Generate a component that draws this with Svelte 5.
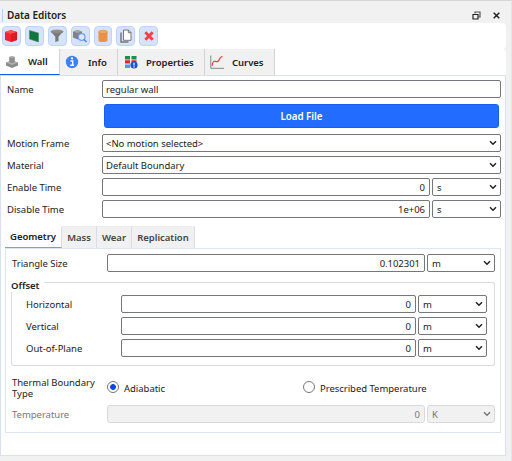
<script>
  let name = $state('regular wall');
  let boundaryType = $state('adiabatic');
  let activeTab = $state('Wall');
  let activeSubTab = $state('Geometry');

  const tools = ['cube', 'plane', 'filter', 'inspect', 'cylinder', 'copy', 'delete'];
  const tabs = ['Wall', 'Info', 'Properties', 'Curves'];
  const subTabs = ['Geometry', 'Mass', 'Wear', 'Replication'];
  const times = [
    { label: 'Enable Time', value: '0' },
    { label: 'Disable Time', value: '1e+06' }
  ];
  const offsets = ['Horizontal', 'Vertical', 'Out-of-Plane'];
</script>

{#snippet icon(kind)}
  <svg class="icon" viewBox="0 0 16 16" width="16" height="16" aria-hidden="true">
    {#if kind === 'cube'}
      <path d="M2 4 8 2l6 2v8l-6 2-6-2z" fill="#f0252f" />
      <path d="M2 4 8 2l6 2-6 2z" fill="#fa5055" />
      <path d="M8 6l6-2v8l-6 2z" fill="#dd1a25" />
    {:else if kind === 'plane'}
      <path d="M3.5 2.5 12.5 5v9L3.5 11z" fill="#12733f" stroke="#3a8a60" stroke-width=".6" />
    {:else if kind === 'filter'}
      <path d="M2 3.5 6.3 8.8V14l3.2-1V8.8L14 3.5z" fill="#777" />
      <ellipse cx="8" cy="3.7" rx="6" ry="1.7" fill="#8d8d8d" stroke="#777" stroke-width=".6" />
    {:else if kind === 'inspect'}
      <path d="M1 3.5 5.5 2l4.5 1.5v6L5.5 11.500 1 9.500z" fill="#828282" />
      <path d="M1 3.500 5.500 2 10 3.500 5.500 5z" fill="#a5a5a5" />
      <circle cx="9.700" cy="9" r="3.300" fill="#dceaff" stroke="#6f9ce6" stroke-width="1.200" />
      <path d="m12 11.300 2.500 2.700" stroke="#4f84d8" stroke-width="1.500" />
    {:else if kind === 'cylinder'}
      <path d="M3.500 4v8.500c0 2 9 2 9 0V4z" fill="#e9924a" />
      <ellipse cx="8" cy="4" rx="4.500" ry="1.800" fill="#efa768" stroke="#d07c33" stroke-width=".5" />
    {:else if kind === 'copy'}
      <path d="M3 4.500v9.500h7.500" fill="none" stroke="#777" stroke-width="1.500" />
      <path d="M5.500 2h5L13 4.500v7.800H5.500z" fill="#fff" stroke="#777" stroke-width="1" />
      <path d="M10.300 2v2.700H13" fill="none" stroke="#666" stroke-width=".9" />
    {:else if kind === 'delete'}
      <path d="m4.300 4.300 7.400 7.400M11.700 4.300l-7.400 7.400" stroke="#f5404a" stroke-width="2.800" />
    {:else if kind === 'Wall'}
      <path d="M2 8.500 8 6.500l6 2v3L8 14l-6-2.500z" fill="#8a8a8a" />
      <path d="M2 8.500 8 6.500l6 2L8 11z" fill="#b0b0b0" />
      <path d="M5.200 3 8 2l2.800 1v5L8 9.200 5.200 8z" fill="#8f8f8f" />
      <path d="M5.200 3 8 2l2.800 1L8 4z" fill="#b5b5b5" />
    {:else if kind === 'Info'}
      <circle cx="8" cy="8" r="6.200" fill="#3d82f5" />
      <path d="M6.500 7h2.200v4M6.300 11.300h3.800" fill="none" stroke="#fff" stroke-width="1.400" />
      <circle cx="8" cy="4.400" r="1.100" fill="#fff" />
    {:else if kind === 'Properties'}
      <path d="M2 2h5v3.500H2zM8.500 2h5v3.500h-5z" fill="#149150" />
      <path d="M2 6.300h5v3.200H2zM8.500 6.300h5v3h-5z" fill="#e8242c" />
      <path d="M2 10.500h5v3.500H2z" fill="#5b94f0" />
      <circle cx="11" cy="11" r="3.600" fill="#1459c7" />
      <path d="M11 8.700v2.800M11 12.300v1.100" stroke="#fff" stroke-width="1.200" />
    {:else if kind === 'Curves'}
      <path d="M1.800 1.500v12.800H15" fill="none" stroke="#888" stroke-width="1" />
      <path d="M3 12C4 5.500 5.500 7.500 8 7.700c3 .2 1.500-5 5.500-5.200" fill="none" stroke="#ee3b45" stroke-width="1.200" />
    {/if}
  </svg>
{/snippet}

{#snippet combo(text, disabled)}
  <div class="field combo" class:disabled>
    <span>{text}</span>
    <svg viewBox="0 0 8 6" width="8" height="6" aria-hidden="true">
      <path d="m1 1.200 3 3 3-3" fill="none" stroke="currentColor" stroke-width="1.500" />
    </svg>
  </div>
{/snippet}

<div class="dock">
  <header class="title-bar">
    <h1>Data Editors</h1>
    <button class="title-button" aria-label="Float">
      <svg viewBox="0 0 9 9" width="9" height="9">
        <path d="M3 2.500V1h5v5H6.500" fill="none" stroke="#555" stroke-width="1.200" />
        <path d="M1 3.500h5V8H1z" fill="#f4f4f4" stroke="#222" stroke-width="1.200" />
      </svg>
    </button>
    <button class="title-button" aria-label="Close">
      <svg viewBox="0 0 9 9" width="9" height="9">
        <path d="m1.700 1.700 5.600 5.600M7.300 1.700 1.700 7.300" stroke="#222" stroke-width="1.500" />
      </svg>
    </button>
  </header>

  <div class="toolbar">
    {#each tools as tool}
      <button class="tool" aria-label={tool}>{@render icon(tool)}</button>
    {/each}
  </div>

  <div class="tabs">
    {#each tabs as tab}
      <button class="tab {tab.toLowerCase()}" class:active={activeTab === tab} onclick={() => (activeTab = tab)}>
        {@render icon(tab)}
        <span>{tab}</span>
      </button>
    {/each}
  </div>

  <main class="panel">
    <div class="form">
      <div class="row">
        <label for="name">Name</label>
        <input id="name" class="field" bind:value={name} />
      </div>
      <button class="load">Load File</button>
      <div class="row">
        <span>Motion Frame</span>
        {@render combo('<No motion selected>', false)}
      </div>
      <div class="row">
        <span>Material</span>
        {@render combo('Default Boundary', false)}
      </div>
      {#each times as time}
        <div class="row with-unit">
          <span>{time.label}</span>
          <div class="field number">{time.value}</div>
          {@render combo('s', false)}
        </div>
      {/each}
    </div>

    <div class="sub-tabs">
      {#each subTabs as tab}
        <button class="sub-tab {tab.toLowerCase()}" class:active={activeSubTab === tab} onclick={() => (activeSubTab = tab)}>{tab}</button>
      {/each}
    </div>

    <section class="sub-panel">
      <div class="row with-unit narrow">
        <span>Triangle Size</span>
        <div class="field number">0.102301</div>
        {@render combo('m', false)}
      </div>

      <div class="group">
        <div class="group-title"><span>Offset</span></div>
        <div class="group-body">
          {#each offsets as offset}
            <div class="row with-unit">
              <span>{offset}</span>
              <div class="field number">0</div>
              {@render combo('m', false)}
            </div>
          {/each}
        </div>
      </div>

      <div class="thermal">
        <span class="thermal-label">Thermal Boundary Type</span>
        <label class="radio">
          <input type="radio" value="adiabatic" bind:group={boundaryType} />
          <span>Adiabatic</span>
        </label>
        <label class="radio">
          <input type="radio" value="prescribed" bind:group={boundaryType} />
          <span>Prescribed Temperature</span>
        </label>
      </div>

      <div class="row with-unit narrow muted">
        <span>Temperature</span>
        <div class="field number disabled">0</div>
        {@render combo('K', true)}
      </div>
    </section>
  </main>
</div>

<style>
  :global(body) {
    background: #f1f1f1;
    overflow: hidden;
  }

  .dock {
    box-sizing: border-box;
    width: 512px;
    height: 461px;
    padding-right: 5px;
    border-right: 1px solid #e2e6ee;
    border-top: 1px solid #d6d6d6;
    background: #f1f1f1;
    font: 9.5px/12px "Noto Sans", sans-serif;
    letter-spacing: -0.03px;
    color: #222;
  }

  .dock * {
    box-sizing: border-box;
  }

  button,
  input {
    margin: 0;
    padding: 0;
    border: 0;
    font: inherit;
    letter-spacing: inherit;
    color: inherit;
    background: none;
  }

  svg {
    display: block;
    flex: none;
  }

  .title-bar {
    display: flex;
    align-items: center;
    height: 22px;
    padding: 7px 0 0 2px;
  }

  h1 {
    flex: 1;
    margin: 0;
    padding-left: 4px;
    border-left: 1px solid #b9cffb;
    font-size: 10px;
    line-height: 13px;
    font-weight: 600;
    letter-spacing: -0.05px;
  }

  .title-button {
    width: 20px;
    display: flex;
    justify-content: center;
  }

  .toolbar {
    display: flex;
    gap: 4px;
    height: 26px;
    padding: 3px 2px;
    background: #fff;
    border-radius: 0 4px 4px 0;
  }

  .tool {
    display: flex;
    align-items: center;
    justify-content: center;
    width: 18.9px;
    height: 20px;
    border: 1px solid #bfd2f8;
    border-radius: 4px;
    background: #d6e3fd;
  }

  .tabs {
    display: flex;
    height: 26px;
    background: #fff;
    border-radius: 0 4px 0 0;
  }

  .tab {
    display: flex;
    align-items: center;
    border-right: 1px solid #d3d3d3;
    background: #f1f1f1;
    font-weight: 600;
  }

  .tab span {
    padding-top: 1px;
  }

  .tab.active {
    background: #fff;
    border-bottom: 1px solid #1857e0;
  }

  .wall {
    width: 60px;
    padding-left: 4px;
    gap: 8px;
  }

  .info {
    width: 58px;
    padding-left: 4px;
    gap: 8px;
  }

  .properties {
    width: 87px;
    padding-left: 5px;
    gap: 7px;
  }

  .curves {
    width: 70px;
    padding-left: 4px;
    gap: 7px;
  }

  .panel {
    height: 381px;
    border: 1px solid #d9e0ee;
    background: #fff;
    padding: 4px 4px 0;
  }

  .form {
    display: flex;
    flex-direction: column;
    gap: 4px;
    padding-left: 2px;
  }

  .row {
    display: grid;
    grid-template-columns: 95px 1fr;
    align-items: center;
    height: 18px;
  }

  .row > span,
  .row > label {
    padding-top: 1px;
  }

  .row.with-unit {
    grid-template-columns: 95px 1fr 69px;
  }

  .row.narrow {
    grid-template-columns: 95px 1fr 68px;
  }

  .with-unit .number {
    margin-right: 2px;
  }

  .field {
    display: flex;
    align-items: center;
    height: 18px;
    min-width: 0;
    padding: 1px 3px 0;
    border: 1px solid #74777d;
    border-radius: 2px;
    background: #fff;
  }

  .number {
    justify-content: flex-end;
    padding-right: 4px;
  }

  .combo {
    justify-content: space-between;
  }

  .combo svg {
    margin-top: -1px;
  }

  .with-unit .combo {
    padding-left: 4px;
  }

  .disabled {
    border-color: #d9d9d9;
    border-radius: 3px;
    background: #f1f1f1;
    color: #777;
  }

  .load {
    height: 24px;
    margin: 2px 2px 2px 97px;
    padding-top: 1px;
    border: 1px solid #1660f0;
    border-radius: 3px;
    background: #226dff;
    color: #fff;
    font-size: 9.8px;
    font-weight: 600;
  }

  .sub-tabs {
    display: flex;
    height: 22px;
    margin-top: 8px;
  }

  .sub-tab {
    padding-top: 1px;
    border-right: 1px solid #dadde3;
    border-top: 1px solid #ececec;
    background: #f1f1f1;
    font-weight: 600;
    color: #444;
  }

  .sub-tab.active {
    padding-top: 0;
    background: #fff;
    border-top-color: #fff;
    border-bottom: 1px solid #7b98ee;
    color: #222;
  }

  .geometry {
    width: 57px;
  }

  .mass,
  .wear {
    width: 35px;
  }

  .replication {
    width: 63px;
  }

  .sub-panel {
    height: 185px;
    padding: 5px 5px 0 6px;
    border: 1px solid #dde5f1;
  }

  .group {
    margin: 8px 0 0 -1px;
  }

  .group-title {
    display: flex;
    align-items: center;
    gap: 5px;
    height: 12px;
    font-weight: 600;
  }

  .group-title::after {
    content: "";
    flex: 1;
    align-self: flex-end;
    height: 9px;
    border: 1px solid #dcdcdc;
    border-width: 1px 1px 0 0;
    border-top-right-radius: 3px;
  }

  .group-body {
    display: flex;
    flex-direction: column;
    gap: 4px;
    height: 74px;
    padding: 3px 7px 0 14px;
    border: 1px solid #dcdcdc;
    border-top: 0;
    border-radius: 0 0 3px 3px;
  }

  .thermal {
    display: grid;
    grid-template-columns: 95px 196px 1fr;
    height: 22px;
    margin: 11px 0 6px;
    line-height: 11px;
  }

  .radio {
    display: flex;
    align-items: center;
    gap: 5px;
    height: 22px;
  }

  .radio input {
    appearance: none;
    width: 12px;
    height: 12px;
    margin-top: -2px;
    border: 1px solid #777;
    border-radius: 50%;
    background: #fff;
  }

  .radio input:checked {
    background: radial-gradient(circle, #0b48e0 2.5px, #fff 3.3px);
  }

  .muted {
    color: #777;
  }
</style>
